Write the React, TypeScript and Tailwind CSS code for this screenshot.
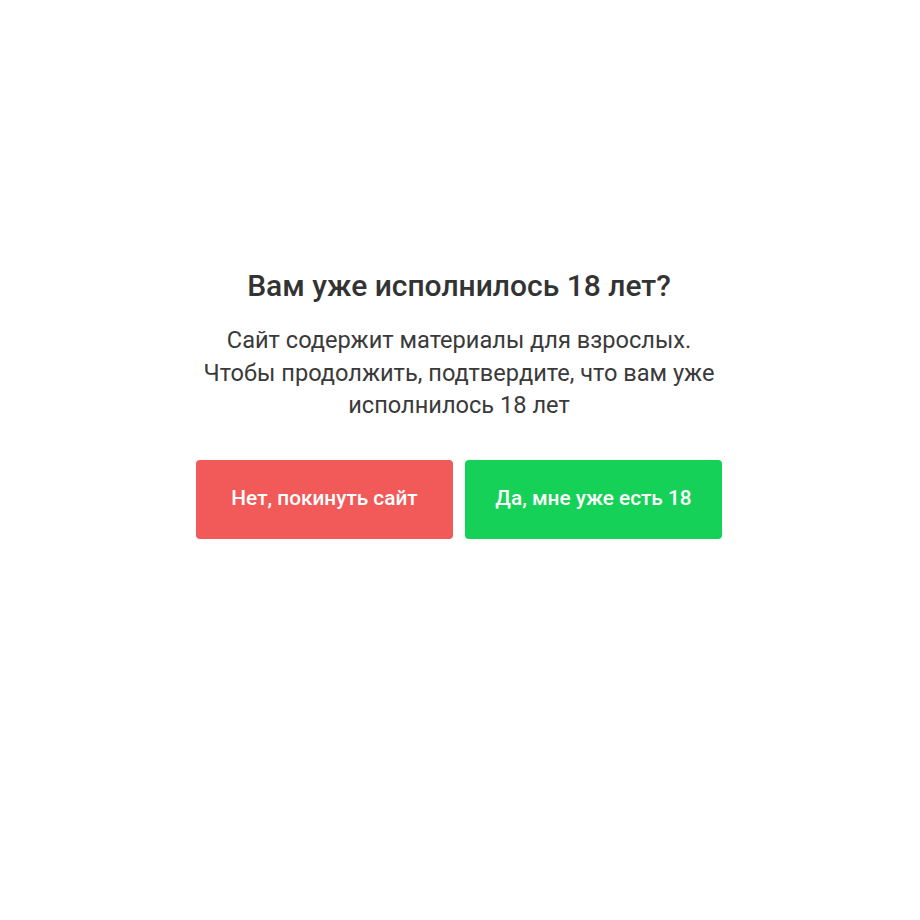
export default function App() {
  return (
    <div className="min-h-screen w-full bg-white pr-[2px] font-['Roboto','Liberation_Sans',sans-serif]">
      <div className="mx-auto flex w-[526px] flex-col items-center pt-[268px] text-center">
        <h1 className="text-[30px] font-medium leading-[36px] text-[#333333]">
          Вам уже исполнилось 18 лет?
        </h1>
        <p className="mt-[20px] text-[23.6px] leading-[32.5px] text-[#3a3a3a]">
          Сайт содержит материалы для взрослых.
          <br />
          Чтобы продолжить, подтвердите, что вам уже исполнилось 18 лет
        </p>
        <div className="mt-[38px] grid w-full grid-cols-2 gap-3">
          <button className="h-[79px] rounded-[4px] bg-[#f25a5a] text-[20.8px] font-medium text-white">
            Нет, покинуть сайт
          </button>
          <button className="h-[79px] rounded-[4px] bg-[#16d158] text-[20.8px] font-medium text-white">
            Да, мне уже есть 18
          </button>
        </div>
      </div>
    </div>
  )
}
